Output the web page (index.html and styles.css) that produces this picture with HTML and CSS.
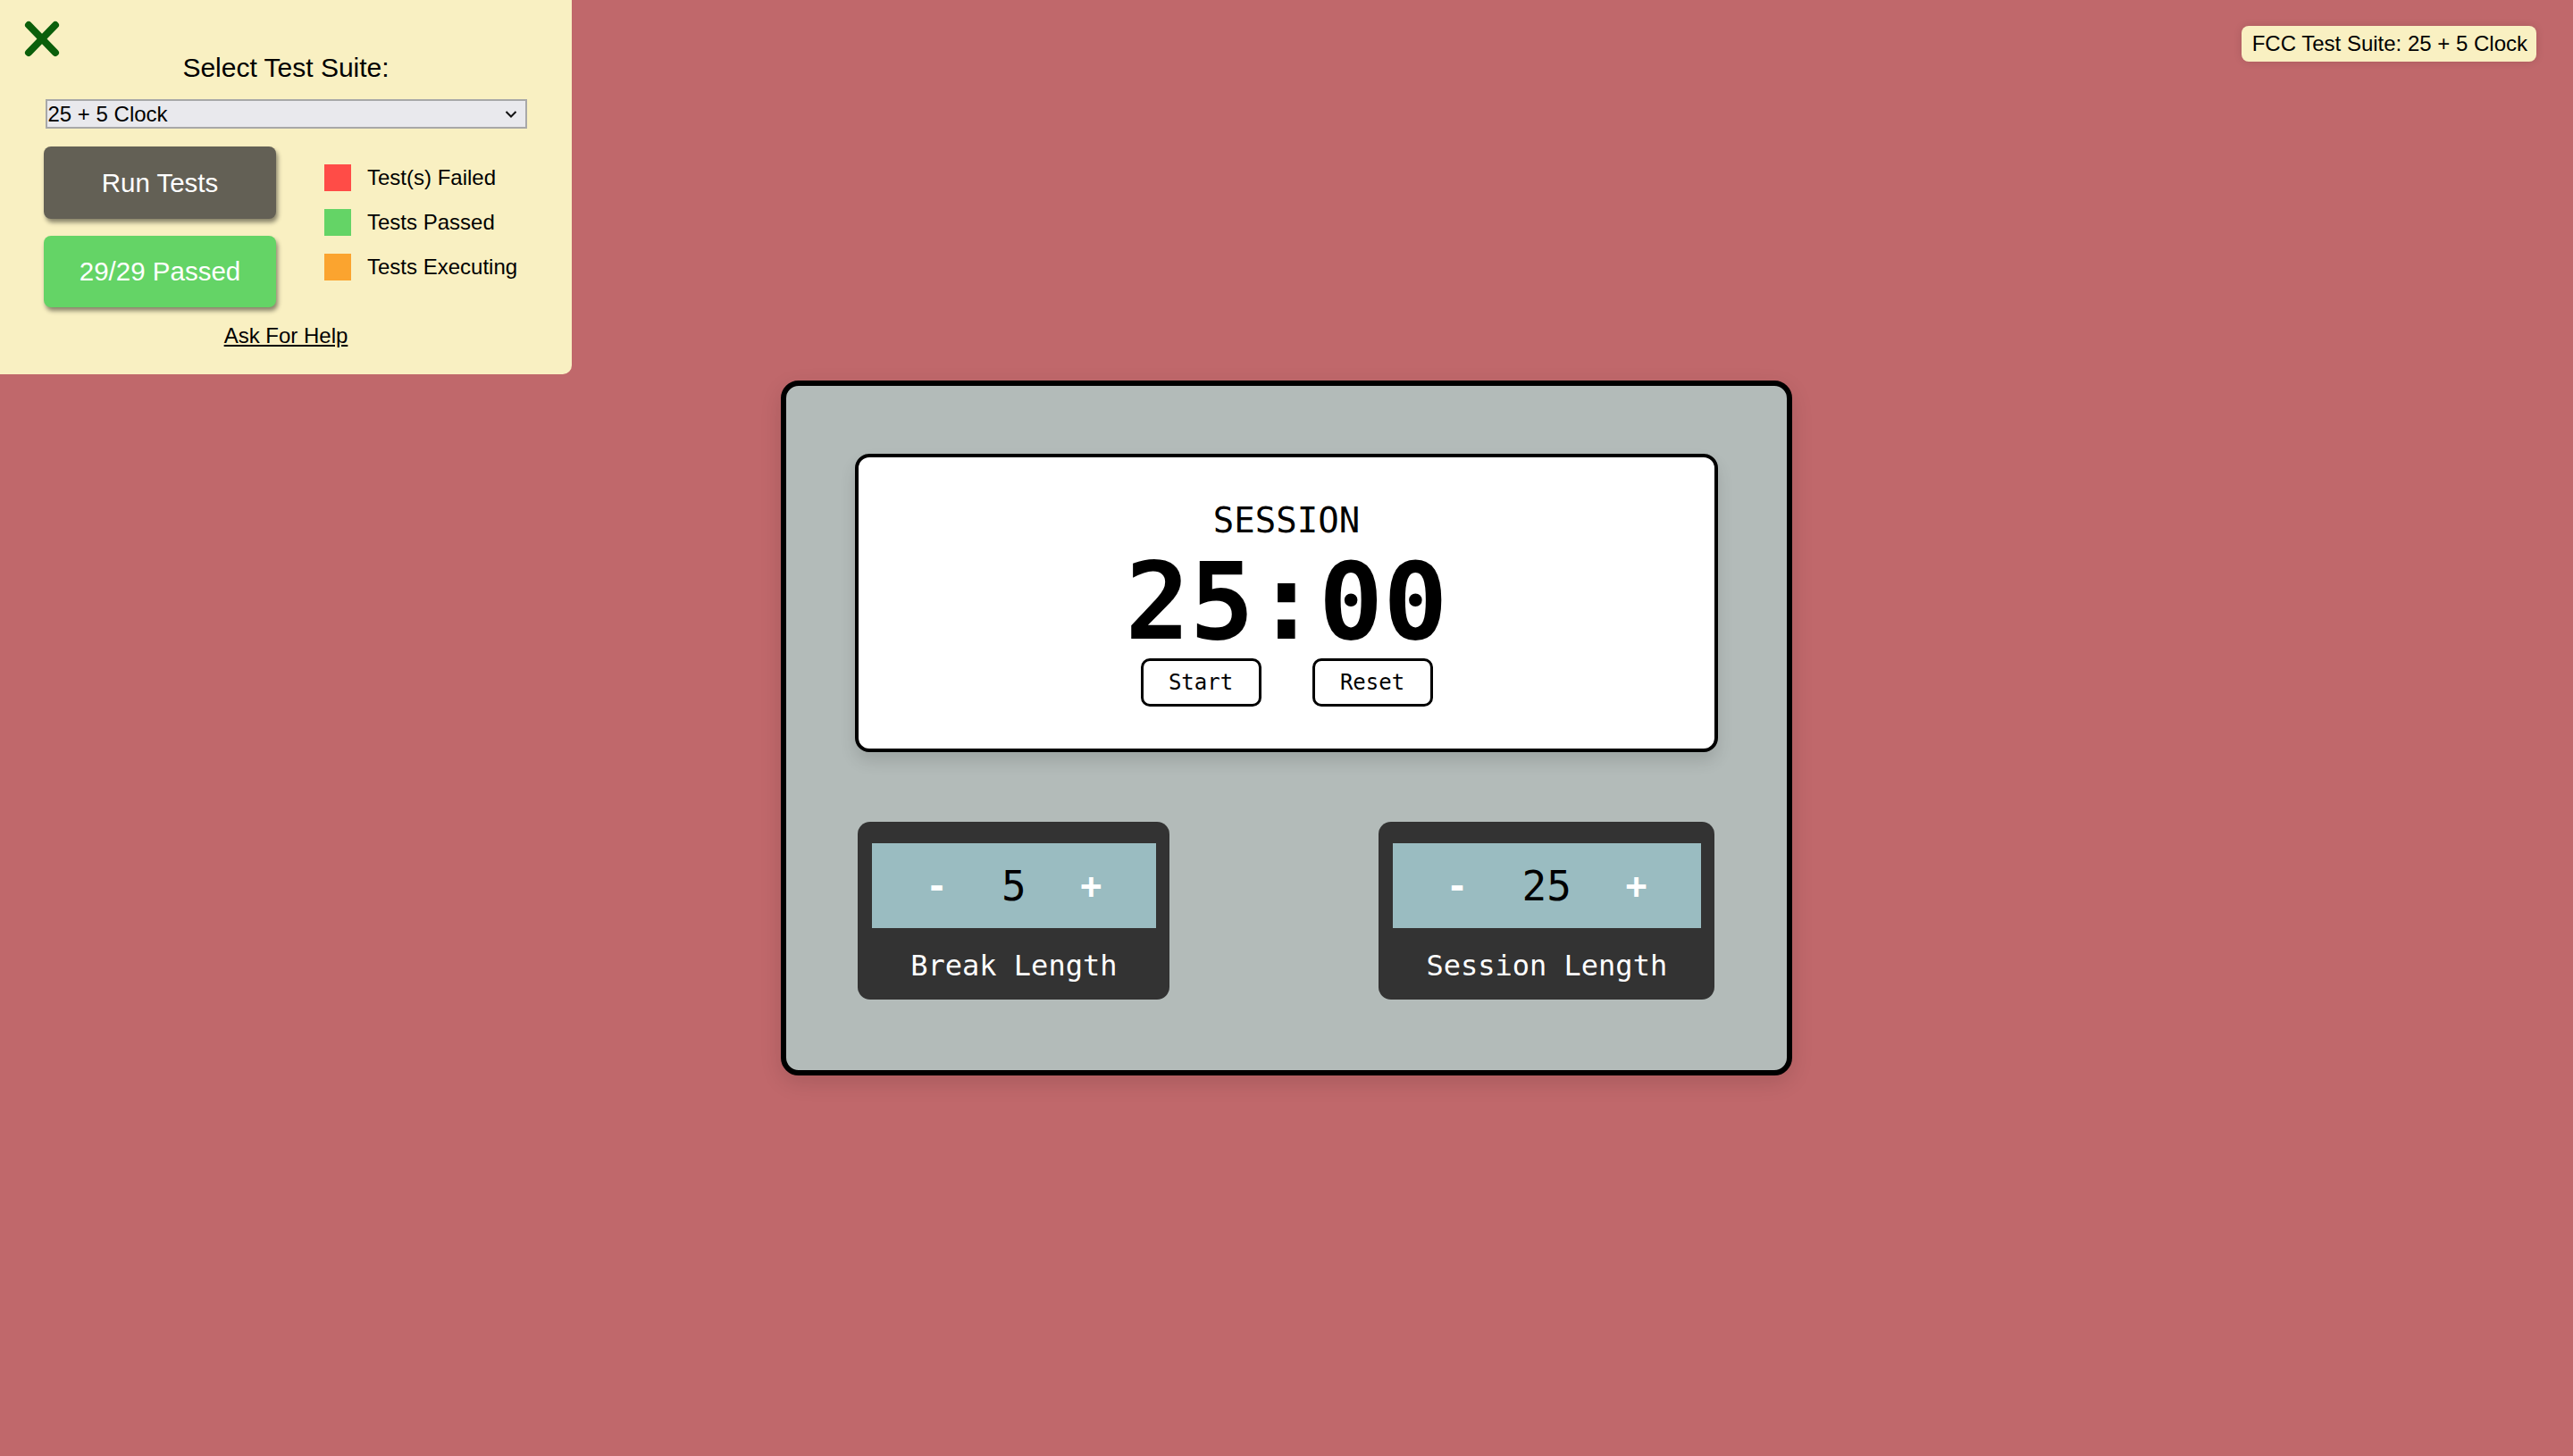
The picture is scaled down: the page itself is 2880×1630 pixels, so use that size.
FILE: index.html
```html
<!DOCTYPE html>
<html lang="en">
<head>
<meta charset="utf-8">
<title>25 + 5 Clock</title>
<link rel="stylesheet" href="styles.css">
</head>
<body>
<main class="stage">
  <div class="clock">
    <section class="display">
      <div class="timer-label">SESSION</div>
      <div class="time-left">25:00</div>
      <div class="controls">
        <button class="ctrl">Start</button>
        <button class="ctrl">Reset</button>
      </div>
    </section>
    <div class="lengths">
      <div class="length">
        <div class="setter">
          <button class="step">-</button>
          <span class="value">5</span>
          <button class="step">+</button>
        </div>
        <div class="length-label">Break Length</div>
      </div>
      <div class="length">
        <div class="setter">
          <button class="step">-</button>
          <span class="value">25</span>
          <button class="step">+</button>
        </div>
        <div class="length-label">Session Length</div>
      </div>
    </div>
  </div>
</main>

<aside class="fcc-panel">
  <svg class="fcc-close" width="56" height="56" viewBox="0 0 56 56">
    <line x1="12" y1="12" x2="42" y2="43" stroke="#0b5f0b" stroke-width="8" stroke-linecap="round"/>
    <line x1="42" y1="12" x2="12" y2="43" stroke="#0b5f0b" stroke-width="8" stroke-linecap="round"/>
  </svg>
  <div class="fcc-title">Select Test Suite:</div>
  <div class="fcc-select">
    <span>25 + 5 Clock</span>
    <svg width="14" height="10" viewBox="0 0 14 10"><polyline points="1.5,2 7,7.5 12.5,2" fill="none" stroke="#111" stroke-width="2"/></svg>
  </div>
  <div class="fcc-row">
    <div class="fcc-buttons">
      <button class="fcc-btn fcc-run">Run Tests</button>
      <button class="fcc-btn fcc-pass">29/29 Passed</button>
    </div>
    <ul class="fcc-legend">
      <li><span class="sw sw-red"></span>Test(s) Failed</li>
      <li><span class="sw sw-green"></span>Tests Passed</li>
      <li><span class="sw sw-orange"></span>Tests Executing</li>
    </ul>
  </div>
  <a class="fcc-help" href="#">Ask For Help</a>
</aside>

<div class="fcc-badge">FCC Test Suite: 25 + 5 Clock</div>
</body>
</html>
```

FILE: styles.css
```css
* { box-sizing: border-box; }

html, body {
  margin: 0;
  height: 100%;
}

body {
  background: #c0686b;
  font-family: "Liberation Sans", Arial, sans-serif;
  color: #000;
}

.stage {
  height: 100vh;
  display: flex;
  align-items: center;
  justify-content: center;
}

.clock {
  width: 1132px;
  background: #b3bbb9;
  border: 6px solid #000;
  border-radius: 20px;
  padding: 76px 77px 79px;
  box-shadow: 0 8px 24px rgba(0, 0, 0, 0.12);
  font-family: "DejaVu Sans Mono", monospace;
}

.display {
  height: 334px;
  background: #fff;
  border: 4px solid #000;
  border-radius: 16px;
  display: flex;
  flex-direction: column;
  align-items: center;
  justify-content: center;
  box-shadow: 0 10px 18px rgba(0, 0, 0, 0.12);
}

.timer-label {
  font-size: 39px;
  line-height: 45px;
}

.time-left {
  font-size: 120px;
  font-weight: 700;
  line-height: 120px;
  margin-top: 9px;
  font-variant-numeric: slashed-zero;
}

.controls {
  display: flex;
  gap: 57px;
  margin-top: 3px;
}

.ctrl {
  width: 135px;
  height: 54px;
  border: 3px solid #000;
  border-radius: 10px;
  background: #fff;
  font-family: inherit;
  font-size: 24px;
  color: #000;
  padding: 0;
}

.lengths {
  display: flex;
  justify-content: space-between;
  margin-top: 78px;
  padding: 0 4px 0 3px;
}

.length {
  background: #333;
  border-radius: 14px;
  padding: 24px 15px 0 16px;
  height: 199px;
  display: flex;
  flex-direction: column;
}

.setter {
  background: #9abcc1;
  height: 95px;
  display: flex;
  align-items: center;
}

.step {
  width: 145px;
  background: none;
  border: 0;
  color: #fff;
  font-family: inherit;
  font-size: 40px;
  font-weight: 700;
  padding: 0;
}

.value {
  font-size: 46px;
  color: #000;
}

.length-label {
  flex: 1;
  display: flex;
  align-items: center;
  justify-content: center;
  color: #fff;
  font-size: 32px;
  padding-top: 4px;
}

/* FCC test suite panel */
.fcc-panel {
  position: absolute;
  top: 0;
  left: 0;
  width: 640px;
  height: 419px;
  background: #f9f0c2;
  border-bottom-right-radius: 10px;
  padding-top: 59px;
  display: flex;
  flex-direction: column;
  align-items: center;
}

.fcc-close {
  position: absolute;
  left: 20px;
  top: 16px;
}

.fcc-title {
  font-size: 30px;
  line-height: 34px;
}

.fcc-select {
  margin-top: 18px;
  width: 539px;
  height: 33px;
  background: #e9e9ed;
  border: 2px solid #a8a8a8;
  display: flex;
  align-items: center;
  justify-content: space-between;
  font-size: 24px;
  padding: 0 9px 0 1px;
}

.fcc-row {
  align-self: stretch;
  margin-top: 20px;
  padding-left: 49px;
  display: flex;
  gap: 54px;
}

.fcc-buttons {
  display: flex;
  flex-direction: column;
  gap: 19px;
}

.fcc-btn {
  width: 260px;
  height: 80px;
  border: 0;
  border-radius: 8px;
  color: #fff;
  font-family: "Liberation Sans", Arial, sans-serif;
  font-size: 29.5px;
  padding: 0;
  box-shadow: 2px 4px 5px rgba(0, 0, 0, 0.45);
}

.fcc-run {
  height: 81px;
  background: #636055;
}

.fcc-pass {
  background: #64d466;
}

.fcc-legend {
  list-style: none;
  margin: 20px 0 0;
  padding: 0;
  display: flex;
  flex-direction: column;
  gap: 20px;
}

.fcc-legend li {
  display: flex;
  align-items: center;
  gap: 18px;
  font-size: 24px;
  height: 30px;
}

.sw {
  width: 30px;
  height: 30px;
  display: block;
}

.sw-red { background: #ff4c47; }
.sw-green { background: #64d466; }
.sw-orange { background: #fba42f; }

.fcc-help {
  margin-top: 18px;
  font-size: 24px;
  color: #000;
  text-decoration: underline;
}

.fcc-badge {
  position: absolute;
  top: 29px;
  right: 41px;
  height: 40px;
  padding: 0 10px 0 12px;
  border-radius: 8px;
  background: #f9f0c2;
  font-size: 24px;
  line-height: 40px;
  box-shadow: 0 0 10px rgba(0, 0, 0, 0.12);
}
```
